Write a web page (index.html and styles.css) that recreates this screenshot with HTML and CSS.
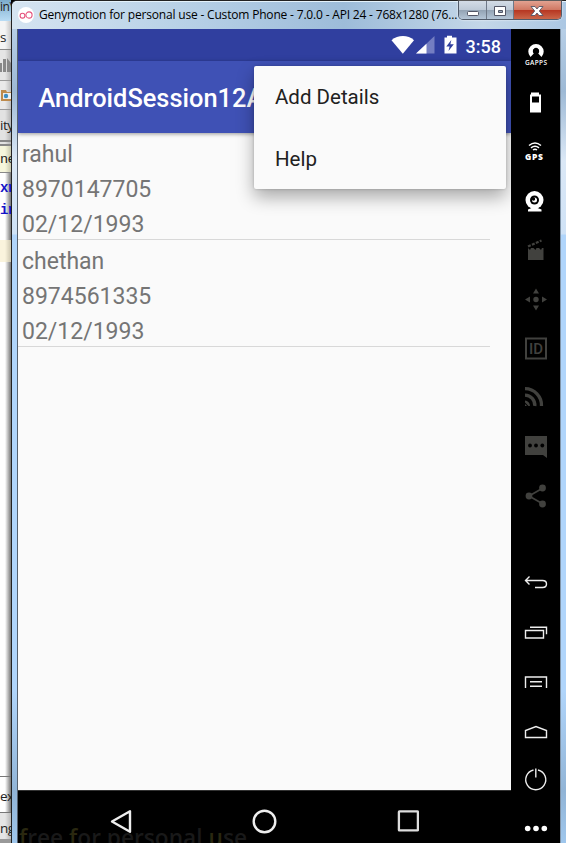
FILE: index.html
```html
<!DOCTYPE html>
<html lang="en">
<head>
<meta charset="utf-8">
<title>Genymotion for personal use</title>
<link rel="stylesheet" href="styles.css">
</head>
<body>
<div class="desktop">
  <div class="behind">
    <div class="b-title">in\</div>
    <div class="b-menu">s</div>
    <div class="b-tool"><svg width="11" height="31"><path d="M0 13h2v9H0zM3 9h3v13H3zM7 8l4 5v9H7z" fill="#888"/></svg></div>
    <div class="b-tool2"><svg width="11" height="29"><path d="M1 9h5l1 2h4v9H1z" fill="#bd8a4c"/><path d="M3 12h8v6H3z" fill="#eee"/><circle cx="6" cy="15" r="2.2" fill="#3c8ec4"/></svg></div>
    <div class="b-tab">ity</div>
    <div class="b-find">ne</div>
    <div class="b-code"><b>xr</b><b>ir</b></div>
    <div class="b-line"></div>
    <div class="b-space"></div>
    <div class="b-foot">ex</div>
    <div class="b-foot b-log">ng</div>
    <div class="b-end"></div>
  </div>
  <div class="window">
    <header class="titlebar">
      <svg class="logo" width="16" height="16"><circle cx="8" cy="8" r="8" fill="#fff"/><circle cx="4.5" cy="8.7" r="2.4" fill="none" stroke="#e5527d" stroke-width="1.1"/><circle cx="11" cy="8" r="3.1" fill="none" stroke="#e5527d" stroke-width="1.1"/></svg>
      <span class="caption">Genymotion for personal use - Custom Phone - 7.0.0 - API 24 - 768x1280 (76...</span>
      <div class="controls">
        <span class="ctl min"><svg width="28" height="19"><rect x="8.5" y="10.500" width="11" height="4" rx="1" fill="#fff" stroke="#535666"/></svg></span>
        <span class="ctl max"><svg width="26" height="19"><path d="M7.500 5.500h11v9h-11zM11.500 9.500v2h4v-2z" fill="#fff" fill-rule="evenodd" stroke="#535666"/></svg></span>
        <span class="ctl close"><svg width="46" height="19"><path d="M17 5.500h4l2 2.500 2-2.500h4L25.300 10l3.700 4.500h-4L23 12l-2 2.500h-4L20.700 10z" fill="#fff" stroke="#535666" stroke-width=".9"/></svg></span>
      </div>
    </header>
    <div class="body">
      <main class="phone">
        <div class="status">
          <svg width="80" height="20" viewBox="0 0 80 20"><path d="M0.500 5.300C7-.300 17-.300 23 5.300L11.800 18.700z" fill="#fff"/><path d="M43.500 1v17.500H25z" fill="#747ec2"/><path d="M35.500 8.700v9.800H25z" fill="#fff"/><path d="M56 .800h5v1.600h4.500V18.500H53.500V2.400h2.500zM60.300 5l-5 6.400h3.300L57.500 16l5.300-6.700h-3.400z" fill="#fff" fill-rule="evenodd"/></svg>
          <span class="time">3:58</span>
        </div>
        <div class="appbar">AndroidSession12A</div>
        <div class="list">
          <div class="item"><span>rahul</span><span>8970147705</span><span>02/12/1993</span></div>
          <div class="item"><span>chethan</span><span>8974561335</span><span>02/12/1993</span></div>
        </div>
        <nav class="nav">
          <svg width="22" height="26"><path d="M20 2.300v20.400L2 12.500z" fill="none" stroke="#eee" stroke-width="2.400" stroke-linejoin="round"/></svg>
          <svg width="26" height="26"><circle cx="12.500" cy="12.500" r="10.800" fill="none" stroke="#eee" stroke-width="2.400"/></svg>
          <svg width="22" height="22"><rect x="1.900" y="1.400" width="19" height="19" rx=".5" fill="none" stroke="#ddd" stroke-width="2.300"/></svg>
          <div class="watermark"><i>f</i>ree <i>f</i>or personal <i>u</i>se</div>
        </nav>
        <div class="menu"><div>Add Details</div><div>Help</div></div>
      </main>
      <aside class="tools">
        <div class="tool"><svg width="30" height="30"><path d="M10.500 19A7.700 7.700 0 1 1 21.500 19L18 15.300A3 3 0 1 0 14 15.300z" fill="#fff"/><circle cx="16" cy="13.200" r="1.900" fill="#fff"/><circle cx="16" cy="13.200" r="3" fill="#000"/><text x="5" y="26.500" textLength="22" class="tiny">GAPPS</text></svg></div>
        <div class="tool"><svg width="30" height="30"><path d="M11 5.500h8v2h2v18H10V7.500h1zM12 9.500v6h7V9.500z" fill="#fff" fill-rule="evenodd"/></svg></div>
        <div class="tool"><svg width="30" height="30"><g fill="none" stroke="#fff" stroke-width="1.500"><path d="M9 9.500q6-5 12 0M11 11.900q4-3.200 8 0M13 14q2-1.600 4 0"/></g><text x="5" y="24" textLength="18" class="gps">GPS</text></svg></div>
        <div class="tool"><svg width="30" height="30"><circle cx="14.500" cy="14" r="9" fill="#fff"/><circle cx="14.500" cy="14" r="4.500" fill="#000"/><circle cx="14.500" cy="14" r="2.500" fill="#fff"/><circle cx="13.500" cy="13" r="1.700" fill="#000"/><path d="M11.500 22h6l4 1.500V25.500H8V23.500z" fill="#fff"/></svg></div>
        <div class="tool dim"><svg width="30" height="30"><path d="M8 15.500h15.500v9.500H8zM8 13l2 2 1-2h2.500l2 2 1-2H19l2 2 1-2h1.500v3H8z"/><path d="M8 11.500l13.500-6" stroke="#41413e" stroke-width="2.200" stroke-dasharray="3 1.300"/></svg></div>
        <div class="tool dim"><svg width="30" height="30"><circle cx="16" cy="15.500" r="2.700"/><path d="M16 4.500l3 5h-6zM16 26.500l3-5h-6zM5 15.500l5-3v6zM27 15.500l-5-3v6z"/></svg></div>
        <div class="tool dim"><svg width="30" height="30"><rect x="6" y="5.500" width="20" height="20" fill="none" stroke="#41413e" stroke-width="2"/><text x="9" y="21" textLength="14" class="idtext">ID</text></svg></div>
        <div class="tool dim"><svg width="30" height="30"><g fill="none" stroke="#41413e" stroke-width="3.300"><path d="M5 6.700a16.500 16.500 0 0 1 16.500 17.300M5 13.200a10 10 0 0 1 9.800 10.800"/></g><path d="M5 18.500a5.500 5.500 0 0 1 5 5.500H8.500L5 20.500zM5 22l2 2H5z"/></svg></div>
        <div class="tool dim"><svg width="30" height="30"><path d="M5 4h22v22l-4-3H5z"/><g fill="#000"><circle cx="10" cy="13.500" r="1.900"/><circle cx="16" cy="13.500" r="1.900"/><circle cx="22.300" cy="13.500" r="1.900"/></g></svg></div>
        <div class="tool dim"><svg width="30" height="30"><path d="M23 7L9 15l14 8" fill="none" stroke="#41413e" stroke-width="1.700"/><circle cx="22.500" cy="7" r="3.400"/><circle cx="9" cy="15" r="3.400"/><circle cx="22.500" cy="23" r="3.400"/></svg></div>
        <div class="tool sys first"><svg width="30" height="30"><path d="M9.500 6.500L5.500 10.500 9.500 14.500M5.500 10.500H22.500Q26.500 10.500 26.500 14T22.500 17.500H15"/></svg></div>
        <div class="tool sys"><svg width="30" height="30"><path d="M5.500 11.500h18v7.500h-18zM10 8.300h16.500v7" /></svg></div>
        <div class="tool sys"><svg width="30" height="30"><path d="M5.500 20V9h21v11"/><path d="M10 13.800h12M10 18.200h12"/></svg></div>
        <div class="tool sys"><svg width="30" height="30"><path d="M5.500 20.500v-7L16 9.500l10.500 4v7z"/></svg></div>
        <div class="tool sys"><svg width="30" height="30"><path d="M13.500 5a10 10 0 1 0 4.500 0M15.800 3.500v9"/></svg></div>
        <div class="tool sys"><svg width="30" height="30"><g fill="#fff" stroke="none"><circle cx="7.700" cy="14.500" r="2.800"/><circle cx="16" cy="14.500" r="2.800"/><circle cx="24.300" cy="14.500" r="2.800"/></g></svg></div>
      </aside>
    </div>
  </div>
</div>
</body>
</html>
```
FILE: styles.css
```css
* { box-sizing: border-box; }
body { margin: 0; background: #000; }
svg { display: block; flex: none; }
.desktop { display: flex; width: 566px; height: 843px; overflow: hidden; }

.behind { width: 11px; flex: none; display: flex; flex-direction: column; overflow: hidden; white-space: nowrap; font: 13.500px "Open Sans", sans-serif; letter-spacing: -.5px; color: #222; background: linear-gradient(90deg, #fff 5px, #777 11px); }
.b-title { height: 21px; font-size: 12px; line-height: 14px; background: linear-gradient(#7daccc, #b9dcf4); }
.b-menu { height: 29px; line-height: 32px; background: #eeeeeeaa; border-bottom: 1px solid #888; }
.b-tool { height: 31px; background: #d8d8d8aa; border-bottom: 1px solid #999; }
.b-tool2 { height: 29px; background: #dededeaa; border-bottom: 1px solid #999; }
.b-tab { height: 36px; line-height: 31px; background: #d4d4d4aa; border-bottom: 6px double #888; }
.b-find { height: 27px; line-height: 28px; font-family: "Liberation Mono", monospace; background: #f1f1cbaa; border-bottom: 1px solid #888; }
.b-code { height: 67px; font: 14px/22px "Liberation Mono", monospace; letter-spacing: -1px; color: #1414c8; padding-top: 4px; }
.b-code b { display: block; }
.b-line { height: 22px; background: #f8efccaa; }
.b-space { flex: 1; }
.b-foot { height: 36px; line-height: 38px; border-top: 1px solid #777; }
.b-log { height: 27px; line-height: 30px; background: #d8d8d8aa; }
.b-end { height: 4px; background: #999; }

.window { flex: 1; min-width: 0; height: 843px; display: flex; flex-direction: column; border-left: 1px solid #222; border-top: 1px solid #222; border-top-left-radius: 6px; background: linear-gradient(#c2d8ee 0, #9db9d5 90px, #dbe8f6 160px, #cfe2f6 233px, #b0d5fb 234px, #b0d5fb 690px, #91b4d6 790px, #9fc7ed 843px); }
.titlebar { height: 28px; flex: none; display: flex; align-items: flex-start; background: linear-gradient(90deg, #d5e4f1, #b4cee5 35%, #9dbcd9 60%, #c4d7e8 85%, #abc7e3); padding-left: 6px; border-top: 1px solid #e4f2fb; border-top-left-radius: 5px; }
.logo { margin: 5px 5px 0 0; }
.caption { flex: 1; min-width: 0; white-space: nowrap; font: 12px/26px "Open Sans", sans-serif; letter-spacing: -.180px; color: #000; }
.controls { display: flex; width: 104px; height: 19px; margin: -1px 4px 0 0; border: 1px solid #515b6a; border-top: 0; border-radius: 0 0 5px 5px; overflow: hidden; box-shadow: 0 0 2px #fff; flex: none; }
.ctl { height: 19px; background: linear-gradient(#d3dce6, #bdc9d6 48%, #94a4b5 50%, #b8c9da); border-right: 1px solid #6e7887; overflow: hidden; }
.min { width: 28px; }
.max { width: 27px; }
.close { flex: 1; border: 0; background: linear-gradient(#e2a291, #cf7661 48%, #b73823 50%, #cc6c4e); }

.body { flex: 1; min-height: 0; display: flex; margin: 0 5px 0 5px; border-left: 1px solid #56616e; border-right: 1px solid #8094a8; }
.phone { position: relative; width: 493px; flex: none; display: flex; flex-direction: column; background: #fafafa; font-family: Roboto, sans-serif; overflow: hidden; }
.status { height: 32px; flex: none; background: #303f9f; display: flex; padding: 6px 8.500px 0 0; justify-content: flex-end; color: #fff; }
.status svg { width: 80px; margin-right: -7px; }
.time { width: 37px; margin-left: 2px; font-size: 18px; font-weight: 500; line-height: 23px; }
.appbar { height: 72px; flex: none; padding-left: 20.500px; background: #3f51b5; color: #fff; font-size: 25.400px; font-weight: 500; line-height: 75px; white-space: nowrap; box-shadow: 0 1px 4px #0006; z-index: 1; }
.list { flex: 1; width: 472px; }
.item { height: 107px; display: flex; flex-direction: column; gap: 8.300px; padding: 7.500px 0 0 4px; border-bottom: 1px solid #d8d8d8; font-size: 23px; line-height: 27px; color: #757575; }
.nav { height: 53px; flex: none; position: relative; overflow: hidden; border-top: 1px solid #333; background: #000; display: flex; justify-content: space-between; align-items: flex-start; padding: 18px 92px 0 92px; }
.nav svg:nth-of-type(3) { margin-top: 1px; }
.watermark { position: absolute; left: 1px; top: 31px; white-space: nowrap; color: #191919; font: 600 22.700px/32px "Open Sans", sans-serif; }
.watermark i { font-style: normal; color: #2a2810; }
.menu { position: absolute; z-index: 2; left: 236px; top: 37px; width: 252px; height: 123px; background: #fafafa; border-radius: 2px; box-shadow: 0 8px 18px #0005, 0 0 3px #0003; font-size: 20.500px; line-height: 62px; color: #212121; padding-left: 21px; }

.tools { width: 50px; flex: 1; background: #000; display: flex; flex-direction: column; }
.tool { height: 49.200px; flex: none; padding: 9px 0 0 9px; }
.tool svg { width: 30px; height: 30px; }
.dim { fill: #41413e; }
.sys { height: 48.900px; }
.sys svg { fill: none; stroke: #eee; stroke-width: 1.400; }
.first { margin-top: 40px; }
.tiny { font: 600 6.500px "Open Sans", sans-serif; fill: #fff; }
.gps { font: 800 8.500px "Open Sans", sans-serif; fill: #fff; }
.idtext { font: 500 15px Roboto, sans-serif; }
```
